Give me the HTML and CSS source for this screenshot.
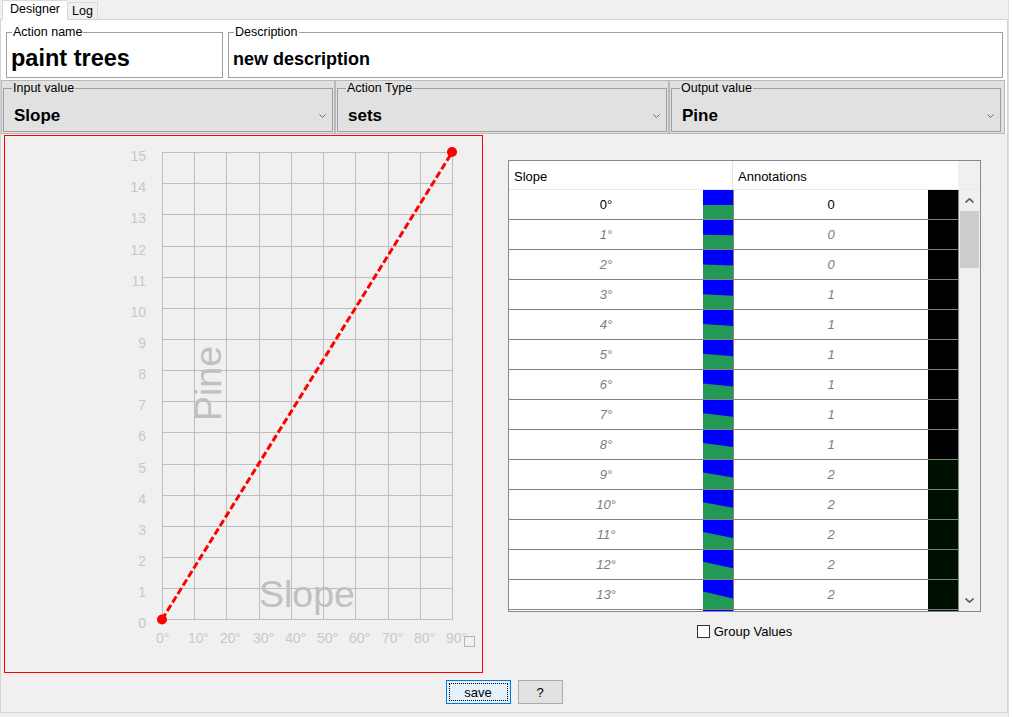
FILE: index.html
```html
<!DOCTYPE html>
<html>
<head>
<meta charset="utf-8">
<title>Designer</title>
<link rel="stylesheet" href="styles.css">
</head>
<body>
<div class="app">
  <div class="tabs">
    <div class="tab active">Designer</div>
    <div class="tab">Log</div>
  </div>
  <div class="panel">
    <div class="row-top">
      <fieldset class="field f-name"><legend>Action name</legend><div class="val big">paint trees</div></fieldset>
      <fieldset class="field f-desc"><legend>Description</legend><div class="val mid">new description</div></fieldset>
    </div>
    <div class="row-combos">
      <div class="combo"><fieldset><legend>Input value</legend><div class="cval">Slope</div><svg class="chev" width="7" height="4" viewBox="0 0 7 4"><path d="M0.5 0.5 L3.5 3.5 L6.5 0.5"/></svg></fieldset></div>
      <div class="combo"><fieldset><legend>Action Type</legend><div class="cval">sets</div><svg class="chev" width="7" height="4" viewBox="0 0 7 4"><path d="M0.5 0.5 L3.5 3.5 L6.5 0.5"/></svg></fieldset></div>
      <div class="combo"><fieldset><legend>Output value</legend><div class="cval">Pine</div><svg class="chev" width="7" height="4" viewBox="0 0 7 4"><path d="M0.5 0.5 L3.5 3.5 L6.5 0.5"/></svg></fieldset></div>
    </div>
    <div class="main">
      <div class="chart">
        <svg class="plot" width="477" height="536" viewBox="5 136 477 536">
          <g class="grid">
            <line x1="162.5" y1="152.5" x2="162.5" y2="619.5"/>
            <line x1="194.5" y1="152.5" x2="194.5" y2="619.5"/>
            <line x1="226.5" y1="152.5" x2="226.5" y2="619.5"/>
            <line x1="259.5" y1="152.5" x2="259.5" y2="619.5"/>
            <line x1="291.5" y1="152.5" x2="291.5" y2="619.5"/>
            <line x1="323.5" y1="152.5" x2="323.5" y2="619.5"/>
            <line x1="355.5" y1="152.5" x2="355.5" y2="619.5"/>
            <line x1="388.5" y1="152.5" x2="388.5" y2="619.5"/>
            <line x1="420.5" y1="152.5" x2="420.5" y2="619.5"/>
            <line x1="452.5" y1="152.5" x2="452.5" y2="619.5"/>
            <line x1="162.5" y1="152.5" x2="452.5" y2="152.5"/>
            <line x1="162.5" y1="183.5" x2="452.5" y2="183.5"/>
            <line x1="162.5" y1="214.5" x2="452.5" y2="214.5"/>
            <line x1="162.5" y1="246.5" x2="452.5" y2="246.5"/>
            <line x1="162.5" y1="277.5" x2="452.5" y2="277.5"/>
            <line x1="162.5" y1="308.5" x2="452.5" y2="308.5"/>
            <line x1="162.5" y1="339.5" x2="452.5" y2="339.5"/>
            <line x1="162.5" y1="370.5" x2="452.5" y2="370.5"/>
            <line x1="162.5" y1="401.5" x2="452.5" y2="401.5"/>
            <line x1="162.5" y1="432.5" x2="452.5" y2="432.5"/>
            <line x1="162.5" y1="464.5" x2="452.5" y2="464.5"/>
            <line x1="162.5" y1="495.5" x2="452.5" y2="495.5"/>
            <line x1="162.5" y1="526.5" x2="452.5" y2="526.5"/>
            <line x1="162.5" y1="557.5" x2="452.5" y2="557.5"/>
            <line x1="162.5" y1="588.5" x2="452.5" y2="588.5"/>
            <line x1="162.5" y1="619.5" x2="452.5" y2="619.5"/>
          </g>
          <g class="ylab">
            <text x="146" y="160.5">15</text>
            <text x="146" y="191.5">14</text>
            <text x="146" y="222.5">13</text>
            <text x="146" y="254.5">12</text>
            <text x="146" y="285.5">11</text>
            <text x="146" y="316.5">10</text>
            <text x="146" y="347.5">9</text>
            <text x="146" y="378.5">8</text>
            <text x="146" y="409.5">7</text>
            <text x="146" y="440.5">6</text>
            <text x="146" y="472.5">5</text>
            <text x="146" y="503.5">4</text>
            <text x="146" y="534.5">3</text>
            <text x="146" y="565.5">2</text>
            <text x="146" y="596.5">1</text>
            <text x="146" y="627.5">0</text>
          </g>
          <g class="xlab">
            <text x="156" y="643">0°</text>
            <text x="188" y="643">10°</text>
            <text x="220" y="643">20°</text>
            <text x="253" y="643">30°</text>
            <text x="285" y="643">40°</text>
            <text x="317" y="643">50°</text>
            <text x="349" y="643">60°</text>
            <text x="382" y="643">70°</text>
            <text x="414" y="643">80°</text>
            <text x="446" y="643">90°</text>
          </g>
          <text class="axis-title" transform="translate(221 421) rotate(-90)">Pine</text>
          <text class="axis-title" x="259" y="607">Slope</text>
          <rect class="corner" x="464.5" y="636.5" width="10" height="10"/>
          <line class="curve" x1="162" y1="619.5" x2="452" y2="152.5"/>
          <circle class="pt" cx="162" cy="619.5" r="5"/>
          <circle class="pt" cx="452" cy="152" r="5"/>
        </svg>
      </div>
      <div class="side">
        <div class="table">
          <div class="thead">
            <div class="th th1">Slope</div>
            <div class="th th2">Annotations</div>
            <div class="th-fill"></div>
          </div>
          <div class="tbody">
            <div class="rows">
              <div class="row first"><div class="c">0°</div><svg class="sw" viewBox="0 0 30 29"><rect width="30" height="29"/><polygon points="0,15 30,15 30,29 0,29"/></svg><div class="c c2">0</div><div class="blk"></div></div>
              <div class="row"><div class="c">1°</div><svg class="sw" viewBox="0 0 30 29"><rect width="30" height="29"/><polygon points="0,14.74 30,15.26 30,29 0,29"/></svg><div class="c c2">0</div><div class="blk"></div></div>
              <div class="row"><div class="c">2°</div><svg class="sw" viewBox="0 0 30 29"><rect width="30" height="29"/><polygon points="0,14.48 30,15.52 30,29 0,29"/></svg><div class="c c2">0</div><div class="blk"></div></div>
              <div class="row"><div class="c">3°</div><svg class="sw" viewBox="0 0 30 29"><rect width="30" height="29"/><polygon points="0,14.21 30,15.79 30,29 0,29"/></svg><div class="c c2">1</div><div class="blk"></div></div>
              <div class="row"><div class="c">4°</div><svg class="sw" viewBox="0 0 30 29"><rect width="30" height="29"/><polygon points="0,13.95 30,16.05 30,29 0,29"/></svg><div class="c c2">1</div><div class="blk"></div></div>
              <div class="row"><div class="c">5°</div><svg class="sw" viewBox="0 0 30 29"><rect width="30" height="29"/><polygon points="0,13.69 30,16.31 30,29 0,29"/></svg><div class="c c2">1</div><div class="blk"></div></div>
              <div class="row"><div class="c">6°</div><svg class="sw" viewBox="0 0 30 29"><rect width="30" height="29"/><polygon points="0,13.42 30,16.58 30,29 0,29"/></svg><div class="c c2">1</div><div class="blk"></div></div>
              <div class="row"><div class="c">7°</div><svg class="sw" viewBox="0 0 30 29"><rect width="30" height="29"/><polygon points="0,13.16 30,16.84 30,29 0,29"/></svg><div class="c c2">1</div><div class="blk"></div></div>
              <div class="row"><div class="c">8°</div><svg class="sw" viewBox="0 0 30 29"><rect width="30" height="29"/><polygon points="0,12.89 30,17.11 30,29 0,29"/></svg><div class="c c2">1</div><div class="blk"></div></div>
              <div class="row"><div class="c">9°</div><svg class="sw" viewBox="0 0 30 29"><rect width="30" height="29"/><polygon points="0,12.62 30,17.38 30,29 0,29"/></svg><div class="c c2">2</div><div class="blk dark"></div></div>
              <div class="row"><div class="c">10°</div><svg class="sw" viewBox="0 0 30 29"><rect width="30" height="29"/><polygon points="0,12.36 30,17.64 30,29 0,29"/></svg><div class="c c2">2</div><div class="blk dark"></div></div>
              <div class="row"><div class="c">11°</div><svg class="sw" viewBox="0 0 30 29"><rect width="30" height="29"/><polygon points="0,12.08 30,17.92 30,29 0,29"/></svg><div class="c c2">2</div><div class="blk dark"></div></div>
              <div class="row"><div class="c">12°</div><svg class="sw" viewBox="0 0 30 29"><rect width="30" height="29"/><polygon points="0,11.81 30,18.19 30,29 0,29"/></svg><div class="c c2">2</div><div class="blk dark"></div></div>
              <div class="row"><div class="c">13°</div><svg class="sw" viewBox="0 0 30 29"><rect width="30" height="29"/><polygon points="0,11.54 30,18.46 30,29 0,29"/></svg><div class="c c2">2</div><div class="blk dark"></div></div>
              <div class="row"><div class="c"></div><svg class="sw" viewBox="0 0 30 29"><rect width="30" height="29"/><polygon points="0,11.26 30,18.74 30,29 0,29"/></svg><div class="c c2"></div><div class="blk dark"></div></div>
            </div>
            <div class="scroll">
              <div class="sb-btn"><svg width="9" height="5" viewBox="0 0 9 5"><path d="M0.5 4.5 L4.5 0.8 L8.5 4.5"/></svg></div>
              <div class="thumb"></div>
              <div class="sb-space"></div>
              <div class="sb-btn"><svg width="9" height="5" viewBox="0 0 9 5"><path d="M0.5 0.5 L4.5 4.2 L8.5 0.5"/></svg></div>
            </div>
          </div>
        </div>
        <label class="check"><span class="box"></span><span>Group Values</span></label>
      </div>
    </div>
    <div class="buttons">
      <button class="btn primary">save</button>
      <button class="btn">?</button>
    </div>
  </div>
</div>
<div class="edge"></div>
</body>
</html>
```

FILE: styles.css
```css
* { box-sizing: border-box; }
html, body { margin: 0; padding: 0; }
body {
  width: 1012px;
  height: 717px;
  overflow: hidden;
  display: flex;
  background: #f0f0f0;
  font-family: "Liberation Sans", Arial, sans-serif;
  font-size: 13px;
  color: #000;
}
.app {
  width: 1008px;
  height: 717px;
  display: flex;
  flex-direction: column;
}
.edge {
  flex: 1;
  background: #fff;
  border-left: 1px solid #e0e0e0;
}

/* tabs */
.tabs {
  height: 19px;
  display: flex;
  align-items: flex-end;
  padding-left: 2px;
}
.tab {
  height: 17px;
  padding: 0 4px;
  border: 1px solid #d9d9d9;
  border-bottom: none;
  font-size: 12.5px;
  line-height: 16px;
  background: #f0f0f0;
}
.tab.active {
  height: 20px;
  margin-bottom: -1px;
  padding: 0 7px;
  line-height: 17px;
  background: #fff;
  border-right: none;
  position: relative;
  z-index: 1;
}

/* panel */
.panel {
  height: 694px;
  border: 1px solid #d4d4d4;
  background: #f0f0f0;
  display: flex;
  flex-direction: column;
}
.row-top {
  background: #fff;
  display: flex;
  gap: 5px;
  padding: 5px 4px 2px 5px;
}
.field {
  margin: 0;
  border: 1px solid #a0a0a0;
  padding: 5px 4px 5px 0;
  min-width: 0;
}
.field legend, .combo legend {
  margin-left: 5px;
  padding: 0 1px;
  font-size: 12.5px;
  line-height: 14px;
}
.f-name { width: 217px; }
.f-desc { flex: 1; }
.val {
  font-weight: bold;
  line-height: 28px;
  height: 28px;
  padding-left: 4px;
  white-space: nowrap;
}
.val.big { font-size: 23.5px; }
.val.mid { font-size: 18px; padding-top: 1px; }

/* combos */
.row-combos {
  display: flex;
  height: 54px;
  background: #fff;
}
.combo {
  width: 334px;
  background: #e1e1e1;
  border: 1px solid #b9b9b9;
  padding: 0 1px 1px 1px;
}
.combo:last-child { width: 336px; }
.combo fieldset {
  margin: 0;
  height: 51px;
  border: 1px solid #a0a0a0;
  padding: 8px 6px 3px 0;
  display: flex;
  align-items: center;
}
.combo:last-child fieldset { margin-right: 2px; }
.combo legend { margin-left: 8px; }
.cval {
  flex: 1;
  padding-left: 10px;
  font-weight: bold;
  font-size: 17px;
  line-height: 24px;
}
.chev {
  fill: none;
  stroke: #6a6a6a;
  stroke-width: 1;
}

/* main */
.main {
  display: flex;
  height: 539px;
}
.chart {
  margin: 1px 0 0 3px;
  width: 479px;
  height: 538px;
  border: 1px solid #ff0000;
  background: #f0f0f0;
}
.plot { display: block; }
.grid line { stroke: #bebebe; stroke-width: 1; }
.ylab text {
  font-family: "Liberation Sans", Arial, sans-serif;
  font-size: 14px;
  fill: #c8c8c8;
  text-anchor: end;
}
.xlab text {
  font-family: "Liberation Sans", Arial, sans-serif;
  font-size: 14px;
  fill: #c8c8c8;
}
.axis-title {
  font-family: "Liberation Sans", Arial, sans-serif;
  font-size: 37.5px;
  fill: #c0c0c0;
}
.corner { fill: none; stroke: #b4b4b4; stroke-width: 1; }
.curve {
  stroke: #ff0000;
  stroke-width: 3;
  stroke-dasharray: 7 3;
}
.pt { fill: #ff0000; }

.side {
  flex: 1;
  padding: 26px 0 0 25px;
  display: flex;
  flex-direction: column;
}
.table {
  width: 473px;
  height: 452px;
  border: 1px solid #828790;
  background: #fff;
  display: flex;
  flex-direction: column;
}
.thead {
  display: flex;
  height: 29px;
  border-bottom: 1px solid #e8e8e8;
}
.th {
  font-size: 13px;
  line-height: 31px;
  padding-left: 5px;
  background: #fff;
}
.th1 { width: 224px; border-right: 1px solid #e5e5e5; }
.th2 { width: 225px; }
.th-fill { flex: 1; background: #f0f0f0; }
.tbody {
  display: flex;
  height: 421px;
}
.rows {
  width: 449px;
  overflow: hidden;
}
.row {
  display: grid;
  grid-template-columns: 194px 30px 195px 30px;
  height: 30px;
  border-bottom: 1px solid #828282;
}
.c {
  text-align: center;
  line-height: 29px;
  font-size: 13px;
  font-style: italic;
  color: #7d7d7d;
}
.row.first .c { font-style: normal; color: #000; }
.c2 { border-left: 1px solid #828282; }
.sw { display: block; width: 30px; height: 29px; }
.sw rect { fill: #0000ff; }
.sw polygon { fill: #229955; }
.blk { background: #000; }
.blk.dark { background: #001000; }
.scroll {
  flex: 1;
  background: #f0f0f0;
  border-left: 1px solid #828282;
  display: flex;
  flex-direction: column;
}
.sb-btn {
  height: 21px;
  display: flex;
  align-items: center;
  justify-content: center;
}
.sb-btn svg { fill: none; stroke: #606060; stroke-width: 1.6; }
.thumb {
  height: 57px;
  margin: 0 1px 0 1px;
  background: #cdcdcd;
}
.sb-space { flex: 1; }

.check {
  margin-top: 12px;
  width: 473px;
  display: flex;
  justify-content: center;
  align-items: center;
  gap: 4px;
  font-size: 13px;
  height: 14px;
}
.box {
  width: 13px;
  height: 13px;
  border: 1px solid #333;
  background: #fff;
}

/* buttons */
.buttons {
  display: flex;
  justify-content: center;
  gap: 7px;
  padding-top: 7px;
}
.btn {
  height: 24px;
  width: 45px;
  margin: 0;
  padding: 0;
  border: 1px solid #adadad;
  background: #e1e1e1;
  font-family: "Liberation Sans", Arial, sans-serif;
  font-size: 13px;
  color: #000;
}
.btn.primary {
  width: 65px;
  border-color: #0078d7;
  background: #e5f1fb;
  outline: 1px dotted #000;
  outline-offset: -4px;
}
```
